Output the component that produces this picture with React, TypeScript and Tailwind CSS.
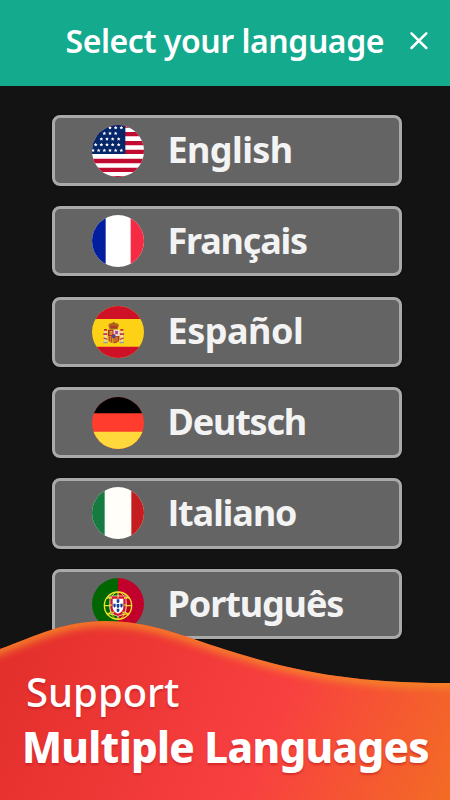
import React from 'react';

type Country = 'us' | 'fr' | 'es' | 'de' | 'it' | 'pt';

interface LanguageOption {
  label: string;
  country: Country;
  textClass: string;
}

const LANGUAGES: LanguageOption[] = [
  { label: 'English', country: 'us', textClass: 'tracking-[-0.6px]' },
  { label: 'Français', country: 'fr', textClass: 'tracking-[-1.2px]' },
  { label: 'Español', country: 'es', textClass: 'tracking-[-0.5px]' },
  { label: 'Deutsch', country: 'de', textClass: 'tracking-[-1.2px]' },
  { label: 'Italiano', country: 'it', textClass: "font-['Open_Sans',sans-serif] tracking-[-1.3px]" },
  { label: 'Português', country: 'pt', textClass: 'tracking-[-1.1px]' },
];

// Rows of stars in the canton: [y, x of each star]
const STARS: [number, number[]][] = [
  [8, [54, 71, 88]],
  [25, [37, 54, 71]],
  [42, [28, 45, 62, 80]],
  [59, [11, 28, 45, 62, 80]],
  [76, [3, 20, 37, 54, 71, 88]],
];

const UsFlag = () => (
  <>
    <path fill="#fff" d="M0 0h156v156H0z" />
    <path fill="#c10a30" d="M0 0h156v8H0zM0 21h156v13H0zM0 48h156v13H0zM0 74h156v13H0zM0 101h156v14H0zM0 128h156v13H0zM0 153h156v3H0z" />
    <path fill="#06266a" d="M0 0h100v87H0z" />
    {STARS.map(([y, xs]) =>
      xs.map((x) => (
        <path
          key={`${x}-${y}`}
          fill="#fff"
          transform={`translate(${x} ${y})`}
          d="M0-5.5 1.8-2 5.5-1.7 2.8 1 3.6 4.8 0 3-3.6 4.8-2.8 1-5.5-1.7-1.8-2z"
        />
      ))
    )}
  </>
);

const EsFlag = () => (
  <>
    <path fill="#fcd116" d="M0 0h156v156H0z" />
    <path fill="#ce1126" d="M0 0h156v39H0zM0 122h156v34H0z" />
    {/* pillars */}
    <path fill="#e6dcc8" d="M37 75h7v34h-7zM86 75h7v34h-7z" />
    <path fill="#b9384a" d="M34 82h12v5H34zM84 82h12v5H84zM35 94l11 4v4l-11-4zM95 94l-11 4v4l11-4z" />
    <path fill="#c22a35" d="M36 69h9v5h-9zM85 69h9v5h-9z" />
    <path fill="#8aa3a0" d="M34 107h13v5H34zM83 107h13v5H83z" />
    {/* crown */}
    <path fill="#b5651d" d="M49 58q2-7 9-6l7-4 7 4q7-1 9 6l-4 11H53z" />
    <path fill="#c22a35" d="M54 60h22l-2 6H56z" />
    <path stroke="#8c5a14" strokeWidth="2" d="M65 48v18M57 55l3 10M73 55l-3 10M53 69h24" fill="none" />
    {/* quartered shield */}
    <path fill="#b52b37" d="M48 71h17v19H48z" />
    <path fill="#eadbe8" d="M65 71h17v19H65z" />
    <path fill="#d9961c" d="M48 90h17v22q-15-1-17-12z" />
    <path fill="#a83139" d="M65 90h17v10q-1 11-17 12z" />
    <path stroke="#efc21b" strokeWidth="2.5" d="M69 92v17M75 92v15" />
    <path stroke="#a83139" strokeWidth="2.5" d="M52 91v15M58 91v18" />
    <path fill="#efc21b" d="M53 75h8v11h-8z" />
    <path fill="#9c7a2b" d="M55 77h4v8h-4z" />
    <path fill="#b23587" d="m69 74 5 2 4-2-1 12-4-3-5 4 2-6z" />
    <ellipse cx="65" cy="91" rx="5" ry="6" fill="#245b9c" stroke="#b52b37" strokeWidth="2" />
  </>
);

const PtFlag = () => (
  <>
    <path fill="#006600" d="M0 0h78v156H0z" />
    <path fill="#c1002b" d="M78 0h78v156H78z" />
    <g fill="none" stroke="#e9e326">
      <circle cx="78" cy="83" r="41" strokeWidth="4" />
      <ellipse cx="78" cy="83" rx="25" ry="41" strokeWidth="2.5" />
      <path strokeWidth="3.5" d="M37 83h82M43 61q35-13 70 0M43 105q35 13 70 0M48 56l62 55M108 56l-62 55M78 42v82" />
    </g>
    <path fill="#d0142e" stroke="#f4e8e0" strokeWidth="2" d="M54 54h48v35q-1 20-24 26-23-6-24-26z" />
    <path fill="#fff" d="M62 62h32v28q-2 12-16 17-14-5-16-17z" />
    <g fill="#14409c">
      <path d="M74 64h8v8q-1 3-4 4-3-1-4-4zM74 78h8v8q-1 3-4 4-3-1-4-4zM74 92h8v7q-1 3-4 4-3-1-4-4zM64 77h7v8q-1 3-3 4-3-1-4-4zM85 77h7v8q-1 3-4 4-3-1-3-4z" />
    </g>
    <path fill="#e9e326" d="M55 57h5v5h-5zM76 55h4v4h-4zM96 57h5v5h-5zM55 79h4v5h-4zM97 79h4v5h-4zM61 101h5v4h-5zM91 101h5v4h-5z" />
  </>
);

const FlagArt: React.FC<{ country: Country }> = ({ country }) => {
  switch (country) {
    case 'us': return <UsFlag />;
    case 'es': return <EsFlag />;
    case 'pt': return <PtFlag />;
    case 'fr': return (
      <>
        <path fill="#fff" d="M0 0h156v156H0z" />
        <path fill="#001e9d" d="M0 0h41v156H0z" />
        <path fill="#f52b43" d="M116 0h40v156h-40z" />
      </>
    );
    case 'de': return (
      <>
        <path fill="#ff3c2d" d="M0 0h156v156H0z" />
        <path fill="#000" d="M0 0h156v49H0z" />
        <path fill="#ffd83b" d="M0 104h156v52H0z" />
      </>
    );
    default: return (
      <>
        <path fill="#fffef8" d="M0 0h156v156H0z" />
        <path fill="#157b40" d="M0 0h38v156H0z" />
        <path fill="#c51c20" d="M118 0h38v156h-38z" />
      </>
    );
  }
};

const Flag: React.FC<{ country: Country }> = ({ country }) => (
  <svg viewBox="0 0 156 156" className="size-[52px] shrink-0 rounded-full">
    <FlagArt country={country} />
  </svg>
);

const Header = () => (
  <header className="flex h-[85.5px] shrink-0 items-start bg-[#13aa8e] pt-[16.5px] pl-[65.5px] text-white">
    <h1 className="w-[343.5px] whitespace-nowrap text-[32px] leading-[48px] font-semibold tracking-[-0.45px]">
      Select your language
    </h1>
    <button aria-label="Close" className="pt-[14px]">
      <svg viewBox="0 0 20 20" className="size-5" fill="none" stroke="currentColor" strokeWidth="2.5" strokeLinecap="round">
        <path d="M2.5 2.3 17.3 17M17.3 2.3 2.5 17" />
      </svg>
    </button>
  </header>
);

const WAVE = 'M0 49C38 35 65 21 105 21C151 21 185 37 225 49.5C290 70 350 83.5 450 83V200H0Z';

const PromoBanner = () => (
  <section className="absolute inset-x-0 bottom-0 h-[200px] text-white">
    <svg viewBox="0 0 450 200" className="absolute inset-0 h-full w-full">
      <defs>
        <linearGradient id="promo" gradientUnits="userSpaceOnUse" x1="20" y1="50" x2="440" y2="220">
          <stop offset="0" stopColor="#e4302d" />
          <stop offset="0.58" stopColor="#f84040" />
          <stop offset="1" stopColor="#f36b25" />
        </linearGradient>
        <clipPath id="wave">
          <path d={WAVE} />
        </clipPath>
        <filter id="glow" x="-10%" y="-30%" width="120%" height="160%">
          <feGaussianBlur stdDeviation="4" />
        </filter>
      </defs>
      <path d={WAVE} fill="url(#promo)" />
      <g clipPath="url(#wave)">
        <path
          d="M-20 56L0 49C38 35 65 21 105 21C151 21 185 37 225 49.5C290 70 350 83.5 450 83H470"
          fill="none"
          stroke="#f58a25"
          strokeWidth="9"
          filter="url(#glow)"
        />
      </g>
    </svg>
    <div className="relative flex flex-col pt-[66px] pl-[26px] whitespace-nowrap [text-shadow:0_2px_2px_#b3151a80]">
      <p className="text-[40px] leading-[52px] font-medium">Support</p>
      <p className="-ml-[4px] text-[42px] leading-[58px] font-extrabold tracking-[-0.7px]">Multiple Languages</p>
    </div>
  </section>
);

const App: React.FC = () => {
  return (
    <div className="relative flex h-[800px] w-[450px] flex-col overflow-hidden bg-[#131313] font-['Noto_Sans',sans-serif]">
      <Header />
      <main className="flex flex-col gap-[20.3px] pt-[29.9px] pl-[52px]">
        {LANGUAGES.map(({ label, country, textClass }) => (
          <button
            key={label}
            className="flex h-[70.4px] w-[349.5px] shrink-0 items-center gap-[24px] rounded-lg border-3 border-[#a9a9a9] bg-[#646464] pl-[36.5px] text-[#f3f3f3] shadow-[0_0_2px_#000]"
          >
            <Flag country={country} />
            <span className={`pb-px text-[36px] leading-[50px] font-bold ${textClass}`}>{label}</span>
          </button>
        ))}
      </main>
      <PromoBanner />
    </div>
  );
};

export default App;
